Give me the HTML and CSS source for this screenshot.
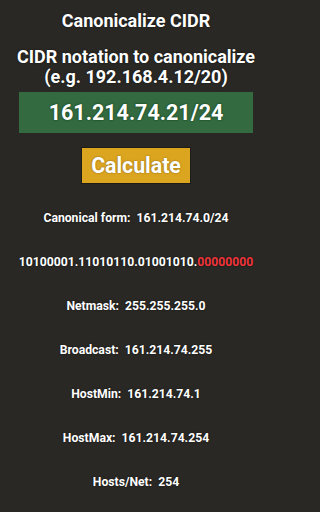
FILE: index.html
```html
<!DOCTYPE html>
<html>
<head>
<meta charset="utf-8">
<link rel="stylesheet" href="styles.css">
</head>
<body>
<main class="app">
  <h1 class="title">Canonicalize CIDR</h1>
  <p class="prompt">CIDR notation to canonicalize<br>(e.g. 192.168.4.12/20)</p>
  <div class="input">161.214.74.21/24</div>
  <button class="calc">Calculate</button>
  <ul class="results">
    <li>Canonical form:&nbsp; 161.214.74.0/24</li>
    <li>10100001.11010110.01001010.<span class="host">00000000</span></li>
    <li>Netmask:&nbsp; 255.255.255.0</li>
    <li>Broadcast:&nbsp; 161.214.74.255</li>
    <li>HostMin:&nbsp; 161.214.74.1</li>
    <li>HostMax:&nbsp; 161.214.74.254</li>
    <li>Hosts/Net:&nbsp; 254</li>
  </ul>
</main>
</body>
</html>
```

FILE: styles.css
```css
html, body {
  margin: 0;
  padding: 0;
  background: #292824;
}
.app {
  width: 272px;
  height: 512px;
  display: flex;
  flex-direction: column;
  align-items: center;
  font-family: Roboto, "Liberation Sans", sans-serif;
  font-weight: bold;
  color: #ffffff;
  text-shadow: 0 0 2px rgba(0,0,0,0.6);
}
.title {
  margin: 10px 0 0;
  font-size: 18px;
  line-height: 22px;
  font-weight: bold;
}
.prompt {
  margin: 15px 0 0;
  font-size: 18px;
  line-height: 20px;
  text-align: center;
}
.input {
  margin-top: 5px;
  width: 234px;
  height: 41px;
  background: #336a40;
  display: flex;
  align-items: center;
  justify-content: center;
  font-size: 21.5px;
  text-shadow: 0 0 2px rgba(0,40,0,0.8);
}
.calc {
  margin-top: 14px;
  width: 110px;
  height: 37px;
  background: #dca520;
  border: 1px solid #1e1c16;
  color: #ffffff;
  font-family: inherit;
  font-weight: bold;
  font-size: 21.3px;
  padding: 0;
  text-shadow: 0 0 2px rgba(0,0,0,0.4);
}
.results {
  list-style: none;
  margin: 26px 0 0;
  padding: 0;
  display: flex;
  flex-direction: column;
  align-items: center;
  gap: 28px;
  font-size: 12.2px;
  line-height: 16px;
}
.host {
  color: #f0353b;
}
```
